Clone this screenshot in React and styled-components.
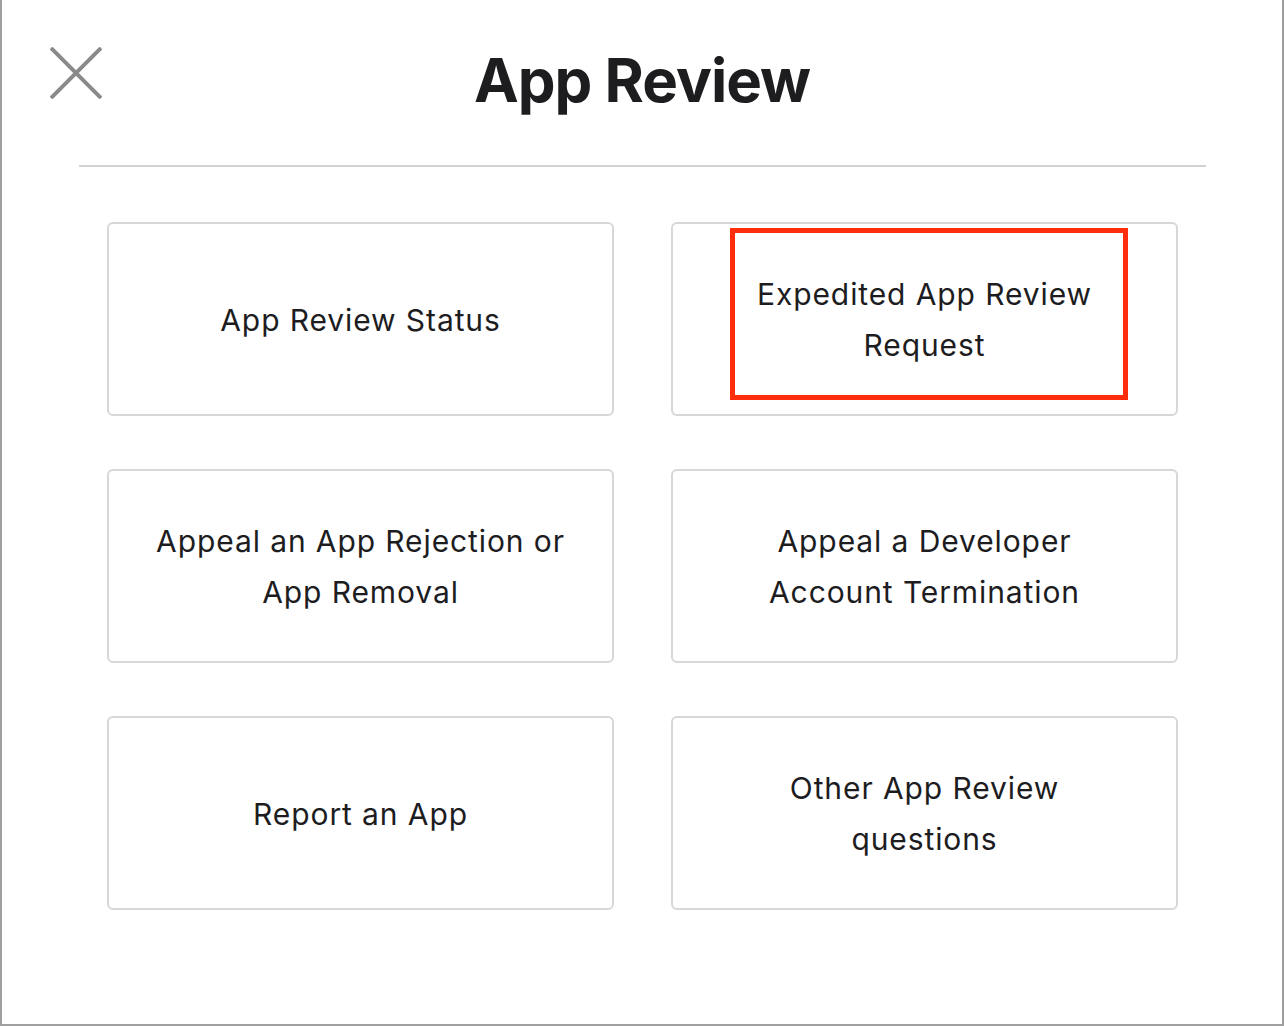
import React from "react"
import styled, { createGlobalStyle } from "styled-components"

const GlobalStyle = createGlobalStyle`
  * {
    box-sizing: border-box;
  }
  body {
    margin: 0;
    background: #fff;
    font-family: Inter, "Noto Sans", "Liberation Sans", sans-serif;
  }
`

const Dialog = styled.div`
  width: 1284px;
  height: 1026px;
  display: flex;
  flex-direction: column;
  background: #fff;
  border: 2px solid #9f9f9f;
  border-top: none;
`

const Header = styled.header`
  display: grid;
  grid-template-columns: 1fr auto 1fr;
  align-items: start;
  height: 165px;
  padding-top: 47px;
`

const CloseButton = styled.button`
  justify-self: start;
  width: 52px;
  height: 52px;
  margin-left: 48px;
  padding: 0;
  border: none;
  background: none;
  cursor: pointer;
  svg {
    display: block;
  }
`

const Title = styled.h1`
  margin: 3px 0 0;
  font-size: 60px;
  line-height: 1;
  font-weight: 700;
  letter-spacing: -1px;
  color: #1d1d1f;
`

const Divider = styled.hr`
  margin: 0 76px 0 77px;
  height: 2px;
  border: none;
  background: #d2d2d6;
`

const Options = styled.div`
  display: grid;
  grid-template-columns: repeat(2, 507px);
  grid-auto-rows: 194px;
  column-gap: 57px;
  row-gap: 53px;
  padding: 55px 105px 0;
`

const Card = styled.button`
  position: relative;
  display: flex;
  flex-direction: column;
  align-items: center;
  justify-content: center;
  padding: 2px 0 0;
  border: 2px solid #d7d7d7;
  border-radius: 6px;
  background: #fff;
  font-family: inherit;
  font-size: 30px;
  line-height: 51px;
  letter-spacing: 0.9px;
  color: #1d1d1f;
  text-align: center;
  cursor: pointer;
`

const Line = styled.span`
  display: block;
  white-space: nowrap;
`

const Highlight = styled.span`
  position: absolute;
  left: 57px;
  top: 4px;
  width: 398px;
  height: 172px;
  border: 5px solid #ff2d0c;
  pointer-events: none;
`

const options = [
  { lines: ["App Review Status"] },
  { lines: ["Expedited App Review", "Request"], marked: true },
  { lines: ["Appeal an App Rejection or", "App Removal"] },
  { lines: ["Appeal a Developer", "Account Termination"] },
  { lines: ["Report an App"] },
  { lines: ["Other App Review", "questions"] },
]

const CloseIcon = () => (
  <svg width="52" height="52" viewBox="0 0 52 52">
    <path d="M1 1 L51 51 M51 1 L1 51" stroke="#8a8a8a" strokeWidth="4" fill="none" />
  </svg>
)

const App = () => {
  return (
    <Dialog>
      <GlobalStyle />
      <Header>
        <CloseButton aria-label="Close">
          <CloseIcon />
        </CloseButton>
        <Title>App Review</Title>
      </Header>
      <Divider />
      <Options>
        {options.map((opt) => (
          <Card key={opt.lines.join(" ")}>
            {opt.lines.map((l) => (
              <Line key={l}>{l}</Line>
            ))}
            {opt.marked && <Highlight />}
          </Card>
        ))}
      </Options>
    </Dialog>
  )
}

export default App
